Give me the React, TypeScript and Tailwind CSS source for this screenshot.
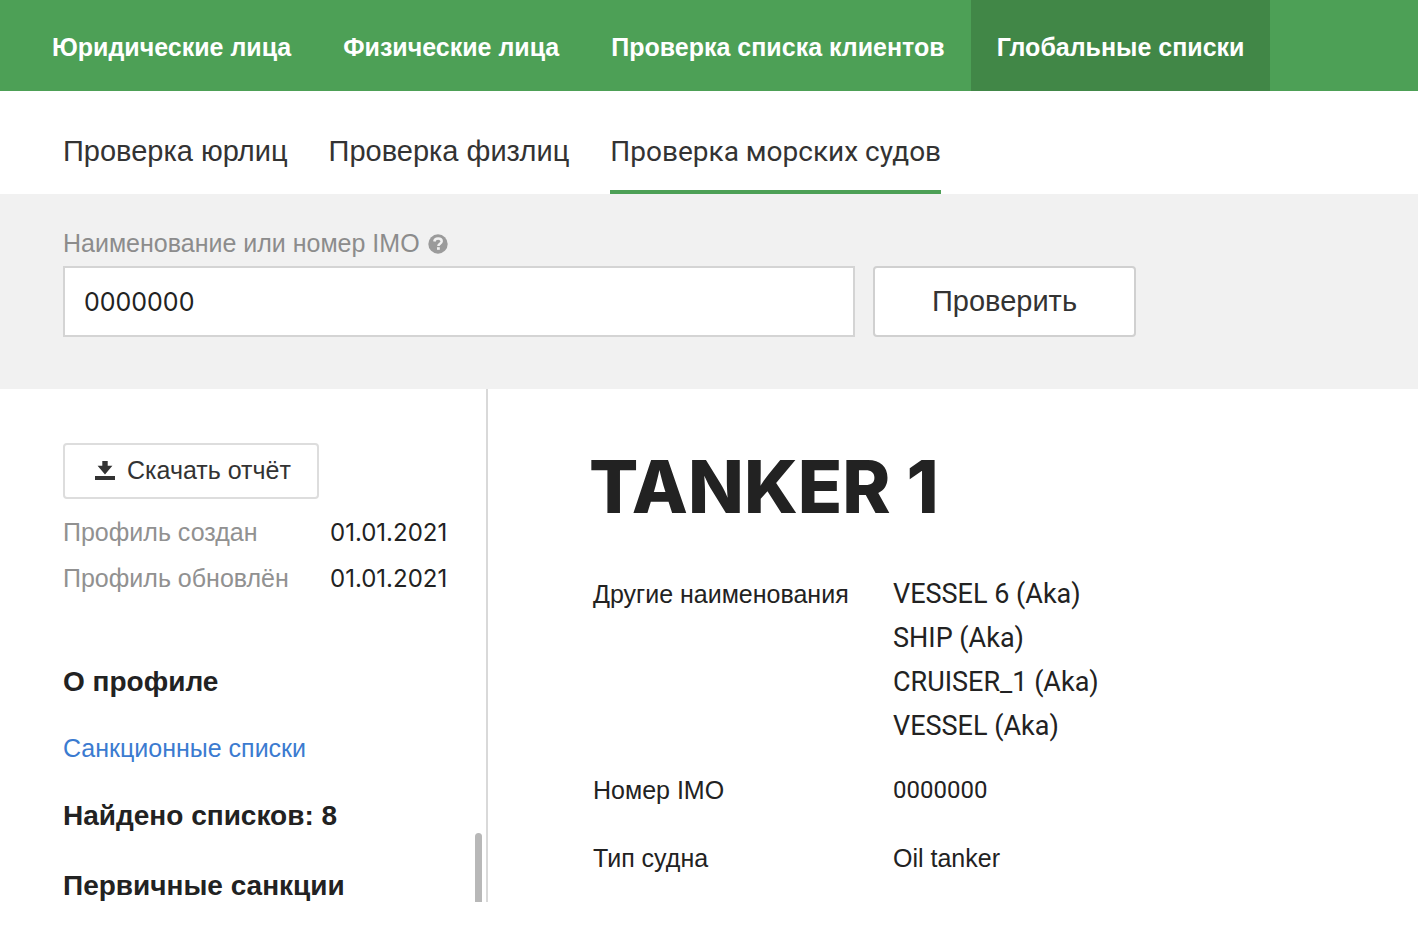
import React from "react";

const sections = [
  { title: "Юридические лица", active: false },
  { title: "Физические лица", active: false },
  { title: "Проверка списка клиентов", active: false },
  { title: "Глобальные списки", active: true },
];

const vesselNames = ["VESSEL 6 (Aka)", "SHIP (Aka)", "CRUISER_1 (Aka)", "VESSEL (Aka)"];

const profileDates = [
  { label: "Профиль создан", value: "01.01.2021" },
  { label: "Профиль обновлён", value: "01.01.2021" },
];

function TopNav() {
  return (
    <nav className="flex h-[91px] bg-[#4da056] pl-[26px] text-[25px] font-bold text-white">
      {sections.map((s) => (
        <a
          key={s.title}
          href="#"
          aria-current={s.active ? "page" : undefined}
          className={
            s.active
              ? "flex items-center bg-[#418747] px-[26px] pt-1 whitespace-nowrap"
              : "flex items-center px-[26px] pt-1 whitespace-nowrap"
          }
        >
          {s.title}
        </a>
      ))}
    </nav>
  );
}

function Tabs() {
  return (
    <nav className="flex h-[103px] gap-[41px] bg-white pl-[63px] text-[29px] text-[#333333]">
      <a href="#" className="flex items-center border-b-4 border-transparent pt-[23px] whitespace-nowrap">
        Проверка юрлиц
      </a>
      <a href="#" className="flex items-center border-b-4 border-transparent pt-[23px] whitespace-nowrap">
        Проверка физлиц
      </a>
      <a
        href="#"
        aria-current="page"
        className="flex items-center border-b-4 border-[#4da056] pt-[23px] font-['Roboto','Liberation_Sans',sans-serif] text-[28px] whitespace-nowrap"
      >
        Проверка морских судов
      </a>
    </nav>
  );
}

function HelpIcon() {
  return (
    <svg viewBox="0 0 20 20" className="size-5" aria-hidden="true">
      <circle cx="10" cy="10" r="9.7" fill="#9b9b9b" />
      <path
        d="M6.3 7.5C6.6 5.4 8.1 4.4 10.1 4.4c2.1 0 3.6 1.1 3.6 2.9 0 2.4-3.3 2.4-3.3 4.6"
        fill="none"
        stroke="#f1f1f1"
        strokeWidth="2.5"
      />
      <rect x="9" y="13.2" width="2.8" height="2.6" fill="#f1f1f1" />
    </svg>
  );
}

function DownloadIcon() {
  return (
    <svg viewBox="0 0 20 20" className="size-5" fill="#333333" aria-hidden="true">
      <path d="M7.3 -0.8h5.4v5.6h4.7L10 13.6 2.6 4.8h4.7z" />
      <rect x="0" y="15" width="20" height="4" />
    </svg>
  );
}

function SearchForm() {
  return (
    <form className="bg-[#f1f1f1] px-[63px] pt-[34px] pb-[52px]" onSubmit={(e) => e.preventDefault()}>
      <div className="flex h-8 items-center gap-2 text-[25px] text-[#8c8c8c]">
        <label htmlFor="imo">Наименование или номер IMO</label>
        <button type="button" aria-label="Подсказка">
          <HelpIcon />
        </button>
      </div>
      <div className="mt-[6px] flex max-w-[1073px] gap-[18px]">
        <input
          id="imo"
          type="text"
          defaultValue="0000000"
          className="h-[71px] min-w-0 flex-1 border-2 border-[#d4d4d4] bg-white px-[19px] font-['Inter','Liberation_Sans',sans-serif] text-[25px] text-[#222222] outline-none"
        />
        <button
          type="submit"
          className="h-[71px] w-[263px] rounded-[4px] border-2 border-[#d0d0d0] bg-white text-[29px] text-[#333333]"
        >
          Проверить
        </button>
      </div>
    </form>
  );
}

function Sidebar() {
  return (
    <aside className="relative w-[488px] shrink-0 border-r-2 border-[#d9d9d9] pt-[54px] pl-[63px]">
      <button
        type="button"
        className="flex h-[56px] items-center gap-3 rounded-[4px] border-2 border-[#dddddd] bg-white pr-[26px] pl-[30px] text-[25px] text-[#333333]"
      >
        <DownloadIcon />
        Скачать отчёт
      </button>
      <dl className="mt-[11px]">
        {profileDates.map((d) => (
          <div key={d.label} className="flex h-[46px] items-center">
            <dt className="w-[267px] text-[25px] text-[#919191]">{d.label}</dt>
            <dd className="font-['Inter','Liberation_Sans',sans-serif] text-[24px]">{d.value}</dd>
          </div>
        ))}
      </dl>
      <h2 className="mt-[62px] text-[28px] leading-[36px] font-bold">О профиле</h2>
      <a href="#" className="mt-[32px] block text-[25px] leading-[32px] text-[#3b7bd0]">
        Санкционные списки
      </a>
      <h2 className="mt-[34px] text-[28px] leading-[36px] font-bold">Найдено списков: 8</h2>
      <h2 className="mt-[34px] -mb-[2px] text-[28px] leading-[36px] font-bold">Первичные санкции</h2>
      <div className="absolute right-[4px] bottom-0 h-[69px] w-[7px] rounded-t-full bg-[#b8b8b8]" />
    </aside>
  );
}

function VesselProfile() {
  return (
    <main className="min-w-0 flex-1 pt-[62px] pl-[105px]">
      <h1 className="-ml-1 font-['Inter','Liberation_Sans',sans-serif] text-[73px] leading-[72px] font-extrabold">
        TANKER 1
      </h1>
      <dl className="mt-[49px] grid grid-cols-[300px_1fr] text-[25px]">
        <dt className="leading-[44px]">Другие наименования</dt>
        <dd className="mb-[20px] font-['Roboto','Liberation_Sans',sans-serif] text-[27px] leading-[44px]">
          {vesselNames.map((n) => (
            <div key={n}>{n}</div>
          ))}
        </dd>
        <dt className="mb-[24px] leading-[44px]">Номер IMO</dt>
        <dd className="mb-[24px] font-['Roboto','Liberation_Sans',sans-serif] text-[24px] leading-[44px]">0000000</dd>
        <dt className="leading-[44px]">Тип судна</dt>
        <dd className="leading-[44px]">Oil tanker</dd>
      </dl>
    </main>
  );
}

export default function App() {
  return (
    <div className="min-h-screen bg-white font-['Liberation_Sans',Arial,sans-serif] text-[#222222]">
      <TopNav />
      <Tabs />
      <SearchForm />
      <div className="flex">
        <Sidebar />
        <VesselProfile />
      </div>
    </div>
  );
}
